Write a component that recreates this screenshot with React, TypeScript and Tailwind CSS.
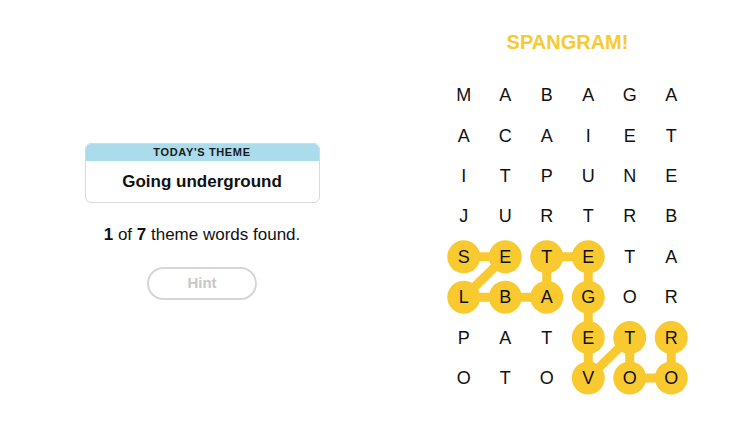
import React from "react";

const rows = [
  "MABAGA",
  "ACAIET",
  "ITPUNE",
  "JURTRB",
  "SETETA",
  "LBAGOR",
  "PATETR",
  "OTOVOO",
];

// ROOT VEGETABLES path (row, col)
const path: [number, number][] = [
  [6, 5],
  [7, 5],
  [7, 4],
  [6, 4],
  [7, 3],
  [6, 3],
  [5, 3],
  [4, 3],
  [4, 2],
  [5, 2],
  [5, 1],
  [5, 0],
  [4, 1],
  [4, 0],
];

const CW = 41.5;
const CH = 40.4;
const YELLOW = "#f8ca30";

const cx = (c: number) => c * CW + CW / 2;
const cy = (r: number) => r * CH + CH / 2;

function Board() {
  return (
    <div className="relative w-[249px] h-[323.2px]">
      <svg className="absolute inset-0" width="249" height="323.2" viewBox="0 0 249 323.2">
        {path.slice(1).map(([r, c], i) => {
          const [pr, pc] = path[i];
          return (
            <line
              key={i}
              x1={cx(pc)}
              y1={cy(pr)}
              x2={cx(c)}
              y2={cy(r)}
              stroke={YELLOW}
              strokeWidth={9}
            />
          );
        })}
        {path.map(([r, c], i) => (
          <circle key={i} cx={cx(c)} cy={cy(r)} r={16.5} fill={YELLOW} />
        ))}
      </svg>
      <div className="relative grid grid-cols-[repeat(6,41.5px)] grid-rows-[repeat(8,40.4px)]">
        {rows.map((row, r) =>
          row.split("").map((ch, c) => (
            <div
              key={`${r}-${c}`}
              className="flex items-center justify-center text-[18px] leading-none text-[#111]"
              style={{ fontFamily: '"Liberation Sans", Arial, sans-serif' }}
            >
              {ch}
            </div>
          ))
        )}
      </div>
    </div>
  );
}

export default function App() {
  return (
    <div className="w-[755px] h-[425px] bg-white flex" style={{ fontFamily: '"Liberation Sans", Arial, sans-serif' }}>
      <div className="w-[404px] flex flex-col items-center pt-[143px]">
        <div className="w-[235px] rounded-[6px] border border-[#d9d9d9] overflow-hidden">
          <div className="h-[17px] bg-[#aadcec] flex items-center justify-center text-[11px] font-bold tracking-[0.06em] text-[#1a1a1a]">
            TODAY&apos;S THEME
          </div>
          <div className="h-[41px] flex items-center justify-center text-[17px] font-bold text-[#111]">
            Going underground
          </div>
        </div>
        <div className="mt-[23px] text-[17px] text-[#111] leading-none">
          <span className="font-bold">1</span> of <span className="font-bold">7</span> theme words found.
        </div>
        <button className="mt-[24px] w-[110px] h-[33px] rounded-full border-2 border-[#d6d6d6] bg-white text-[15px] font-bold text-[#c8c8c8]">
          Hint
        </button>
      </div>
      <div className="w-[327px] flex flex-col items-center">
        <div className="mt-[31px] h-[22px] text-[20px] font-bold leading-[22px]" style={{ color: YELLOW }}>
          SPANGRAM!
        </div>
        <div className="mt-[22px]">
          <Board />
        </div>
      </div>
    </div>
  );
}
